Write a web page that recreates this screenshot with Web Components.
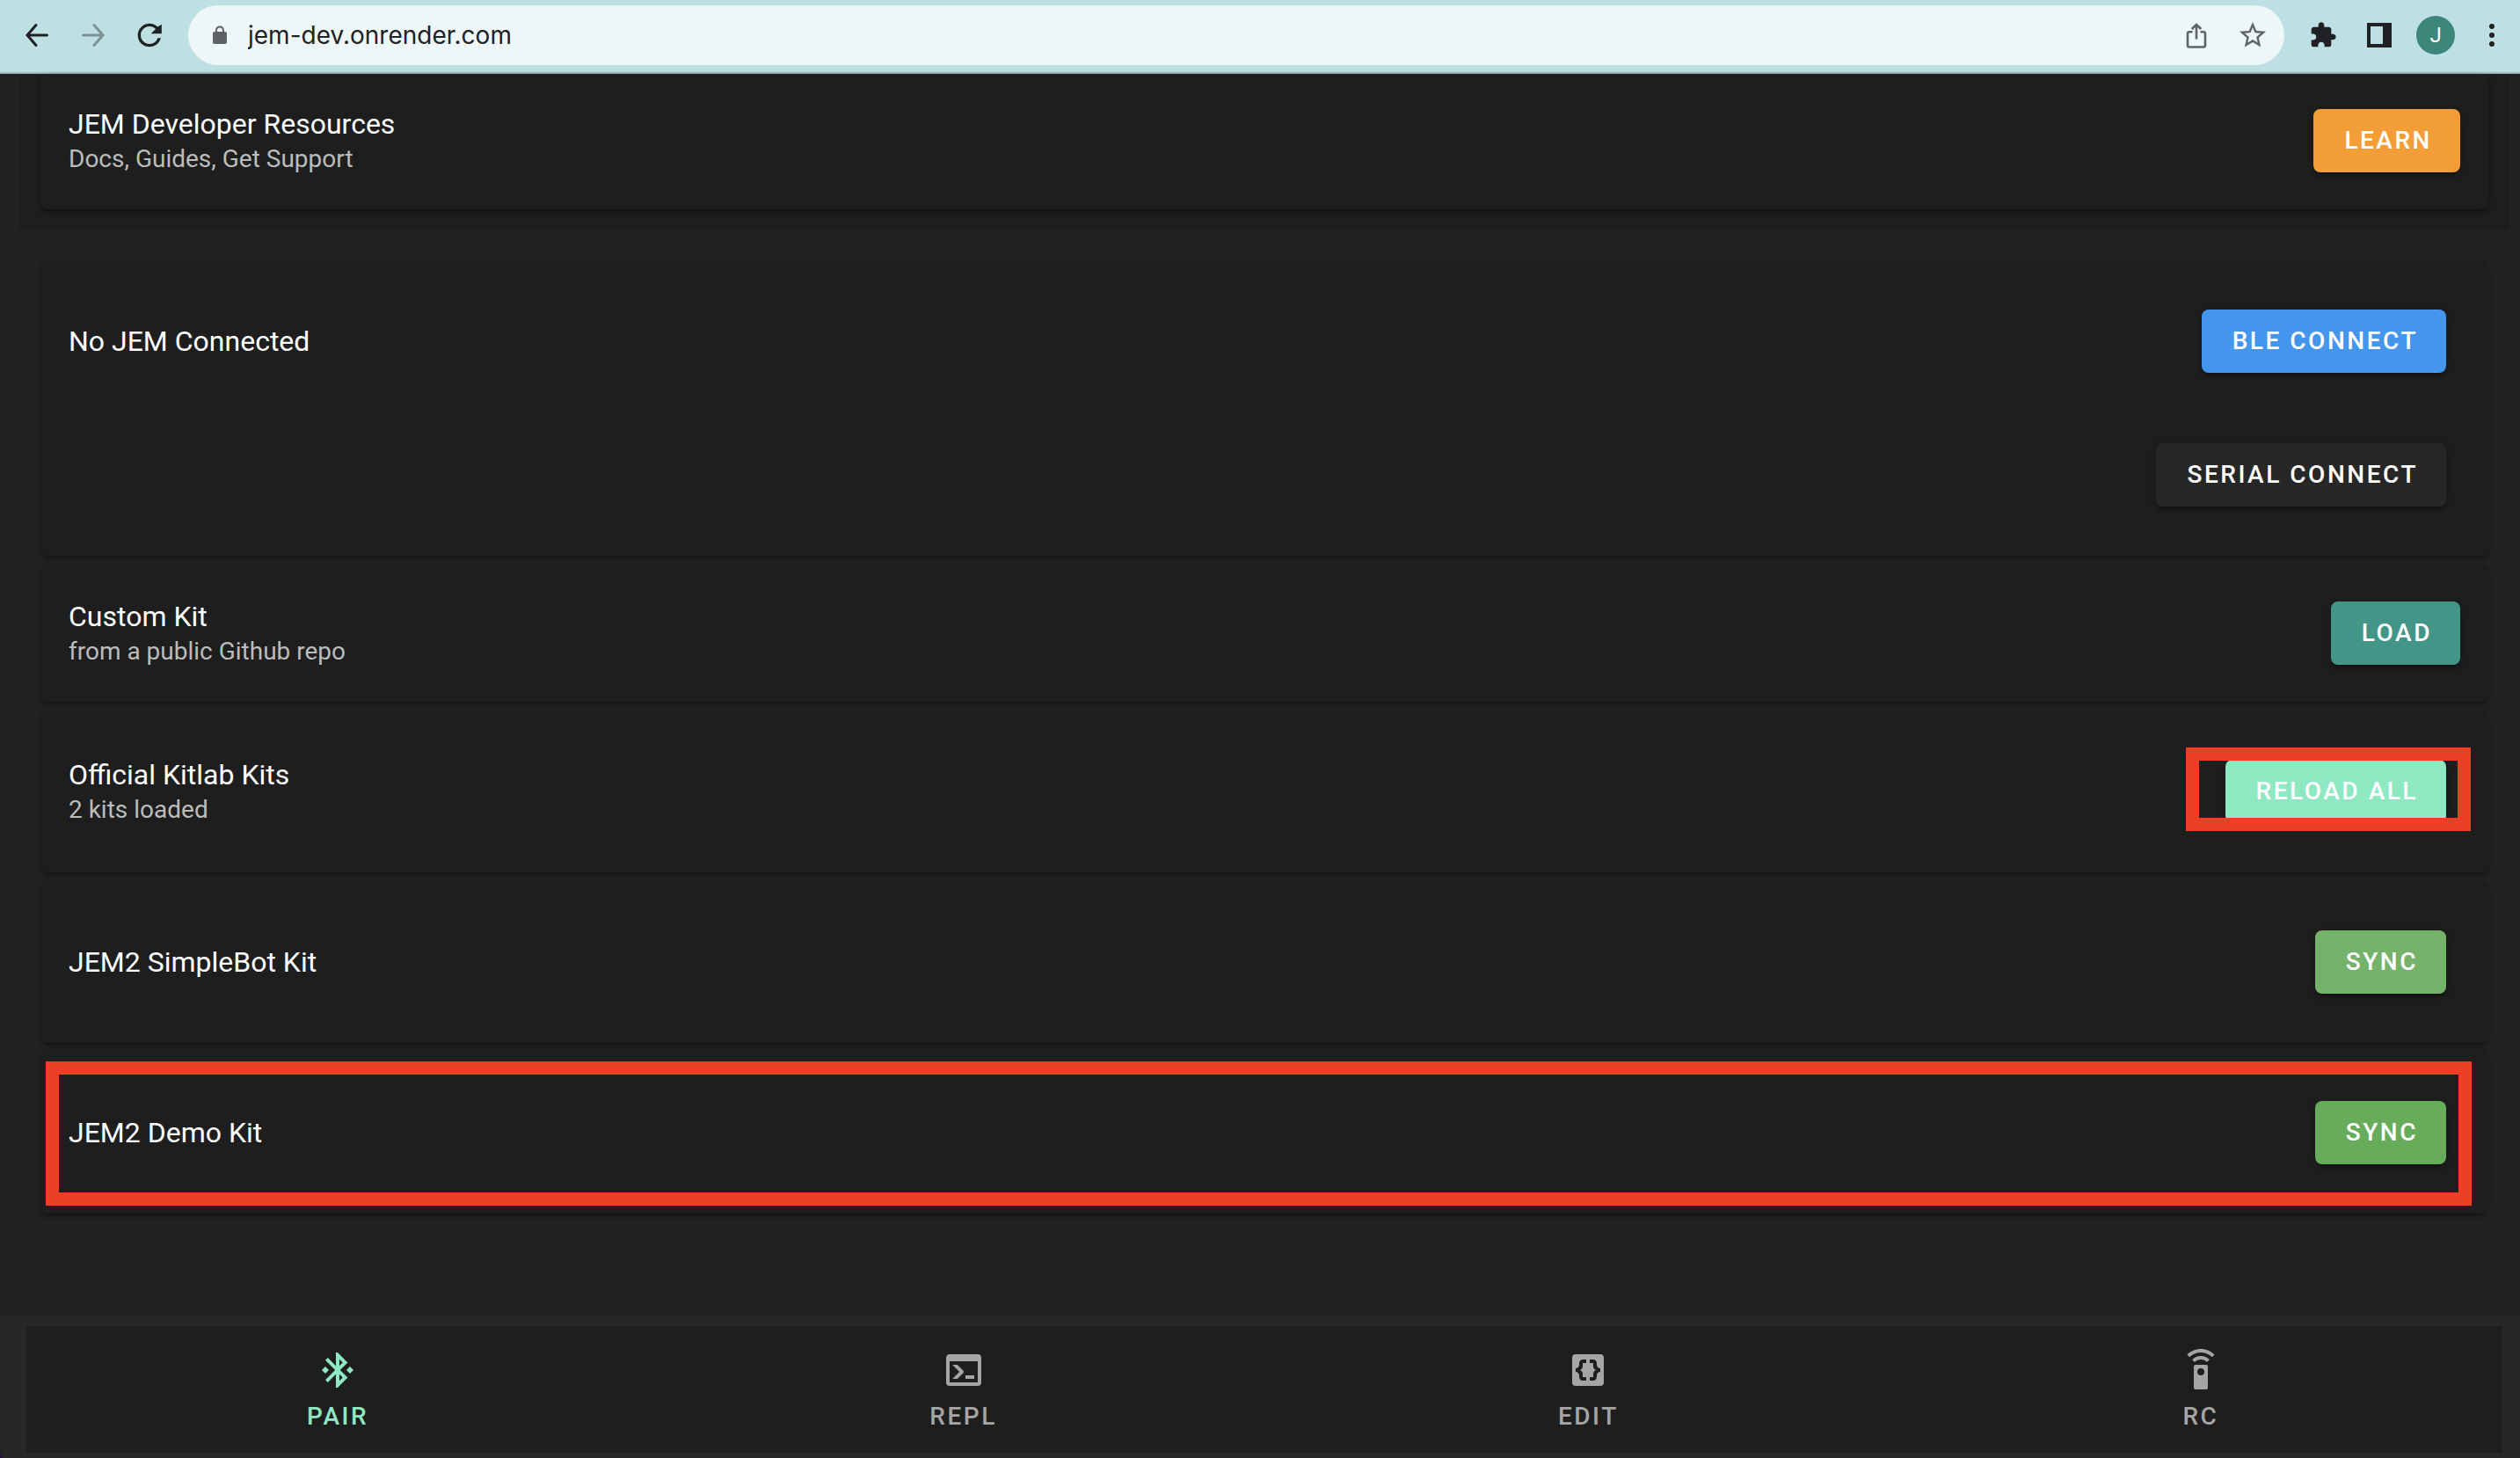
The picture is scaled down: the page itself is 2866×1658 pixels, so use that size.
<!DOCTYPE html>
<html lang="en">
<head>
<meta charset="utf-8">
<meta name="viewport" content="width=device-width, initial-scale=1">
<title>JEM Dev</title>
<style>
  html { background: #23104f; }
  body { margin: 0; font-family: Roboto, "Liberation Sans", sans-serif; color: #fff; }
</style>
</head>
<body>
<jem-window></jem-window>

<script>
const ICONS = {
  back: '<svg viewBox="0 0 40 40" fill="none" stroke="currentColor" stroke-width="3" stroke-linecap="round" stroke-linejoin="miter"><path d="M31.500 20H10M19 8.500 9 20l10 11.500"/></svg>',
  forward: '<svg viewBox="0 0 40 40" fill="none" stroke="currentColor" stroke-width="3" stroke-linecap="round" stroke-linejoin="miter"><path d="M8.500 20H30M21 8.500 31 20 21 31.500"/></svg>',
  reload: '<svg viewBox="0 0 24 24" fill="currentColor"><path d="M17.650 6.350A7.958 7.958 0 0 0 12 4c-4.420 0-7.990 3.580-7.990 8s3.570 8 7.990 8c3.730 0 6.840-2.550 7.730-6h-2.080A5.990 5.990 0 0 1 12 18c-3.310 0-6-2.690-6-6s2.690-6 6-6c1.660 0 3.140.690 4.220 1.780L13 11h7.300V4.600z"/></svg>',
  lock: '<svg viewBox="0 0 24 24" fill="currentColor"><path d="M18 8h-1V6.500C17 3.500 14.800 1.500 12 1.500S7 3.500 7 6.500V8H6c-1.100 0-2 .900-2 2v10c0 1.100.900 2 2 2h12c1.100 0 2-.900 2-2V10c0-1.100-.900-2-2-2zM9 8V6.500c0-1.900 1.300-3 3-3s3 1.100 3 3V8z"/></svg>',
  share: '<svg viewBox="0 0 40 40" fill="none" stroke="currentColor" stroke-width="2.600"><path d="M15.500 16.300H12a2 2 0 0 0-2 2V31.500a2 2 0 0 0 2 2H28a2 2 0 0 0 2-2V18.300a2 2 0 0 0-2-2H24.500M20 24.500V8.500M14.700 13 20 8l5.300 5"/></svg>',
  star: '<svg viewBox="0 0 24 24" fill="currentColor"><path d="M22 9.240l-7.190-.620L12 2 9.190 8.630 2 9.240l5.460 4.730L5.820 21 12 17.270 18.180 21l-1.630-7.030L22 9.240zM12 15.400l-3.760 2.270 1-4.280-3.320-2.880 4.380-.380L12 6.100l1.710 4.040 4.380.380-3.320 2.880 1 4.280L12 15.400z"/></svg>',
  puzzle: '<svg viewBox="0 0 24 24" fill="currentColor"><path d="M20.500 11H19V7c0-1.100-.900-2-2-2h-4V3.500C13 2.120 11.880 1 10.500 1S8 2.120 8 3.500V5H4c-1.100 0-1.990.900-1.990 2v3.800H3.500c1.490 0 2.700 1.210 2.700 2.700s-1.210 2.700-2.700 2.700H2V20c0 1.100.900 2 2 2h3.800v-1.500c0-1.490 1.210-2.700 2.700-2.700 1.490 0 2.700 1.210 2.700 2.700V22H17c1.100 0 2-.900 2-2v-4h1.500c1.380 0 2.500-1.120 2.500-2.500S21.880 11 20.500 11z"/></svg>',
  panel: '<svg viewBox="0 0 40 40" fill="currentColor"><path fill-rule="evenodd" d="M6 6H34V34H6zM10 10V30H24V10z"/></svg>',
  dots: '<svg viewBox="0 0 40 40" fill="currentColor"><circle cx="20" cy="10" r="3"/><circle cx="20" cy="20" r="3"/><circle cx="20" cy="30" r="3"/></svg>',
  bluetooth: '<svg viewBox="0 0 24 24" fill="currentColor"><path d="M19,10L17,12L19,14L21,12M14.880,16.290L13,18.170V14.410M13,5.830L14.880,7.710L13,9.580M17.710,7.710L12,2H11V9.580L6.410,5L5,6.410L10.590,12L5,17.580L6.410,19L11,14.410V22H12L17.710,16.290L13.410,12M7,12L5,10L3,12L5,14L7,12Z"/></svg>',
  console: '<svg viewBox="0 0 24 24" fill="currentColor"><path d="M20,19V7H4V19H20M20,3A2,2 0 0,1 22,5V19A2,2 0 0,1 20,21H4A2,2 0 0,1 2,19V5C2,3.890 2.900,3 4,3H20M13,17V15H18V17H13M9.580,13L5.570,9H8.400L11.700,12.300C12.090,12.690 12.090,13.330 11.700,13.720L8.420,17H5.590L9.580,13Z"/></svg>',
  braces: '<svg viewBox="0 0 24 24" fill="currentColor"><path fill-rule="evenodd" d="M19,3H5A2,2 0 0,0 3,5V19A2,2 0 0,0 5,21H19A2,2 0 0,0 21,19V5A2,2 0 0,0 19,3M11,8H9V10C9,11.100 8.100,12 7,12C8.100,12 9,12.900 9,14V16H11V18H9C7.900,18 7,17.100 7,16V15C7,13.900 6.100,13 5,13V11C6.100,11 7,10.100 7,9V8C7,6.900 7.900,6 9,6H11V8M19,13C17.900,13 17,13.900 17,15V16C17,17.100 16.100,18 15,18H13V16H15V14C15,12.900 15.900,12 17,12C15.900,12 15,11.100 15,10V8H13V6H15C16.100,6 17,6.900 17,8V9C17,10.100 17.900,11 19,11V13Z"/></svg>',
  remote: '<svg viewBox="0 0 24 24" fill="currentColor"><path d="M12,0C8.960,0 6.210,1.230 4.220,3.220L5.630,4.630C7.260,3 9.500,2 12,2C14.500,2 16.740,3 18.360,4.640L19.770,3.230C17.790,1.230 15.040,0 12,0M7.050,6.050L8.460,7.460C9.370,6.560 10.620,6 12,6C13.380,6 14.630,6.560 15.540,7.460L16.950,6.050C15.680,4.780 13.930,4 12,4C10.070,4 8.320,4.780 7.050,6.050M12,15A2,2 0 0,1 10,13A2,2 0 0,1 12,11A2,2 0 0,1 14,13A2,2 0 0,1 12,15M15,9H9A1,1 0 0,0 8,10V22A1,1 0 0,0 9,23H15A1,1 0 0,0 16,22V10A1,1 0 0,0 15,9Z"/></svg>'
};

function define(name, html) {
  const template = document.createElement('template');
  template.innerHTML = html;
  customElements.define(name, class extends HTMLElement {
    constructor() {
      super();
      this.attachShadow({ mode: 'open' }).append(template.content.cloneNode(true));
    }
  });
}

customElements.define('jem-icon', class extends HTMLElement {
  constructor() {
    super();
    this.attachShadow({ mode: 'open' });
  }
  connectedCallback() {
    this.shadowRoot.innerHTML = `
      <style>
        :host { display: block; flex: none; width: var(--icon-size, 40px); height: var(--icon-size, 40px); }
        svg { display: block; width: 100%; height: 100%; }
      </style>${ICONS[this.getAttribute('name')] || ''}`;
  }
});

/* Icon button of the browser toolbar */
customElements.define('tool-button', class extends HTMLElement {
  constructor() {
    super();
    this.attachShadow({ mode: 'open' });
  }
  connectedCallback() {
    const icon = this.getAttribute('icon');
    this.shadowRoot.innerHTML = `
      <style>
        :host { display: block; flex: none; color: #202124; }
        :host([tone="faded"]) { color: #7c9295; }
        :host([tone="soft"]) { color: #5f6368; }
        button { display: flex; align-items: center; justify-content: center; width: 40px; height: 40px;
                 margin: 0; padding: 0; border: 0; background: none; color: inherit; }
      </style>
      <button type="button" aria-label="${this.getAttribute('label')}"><jem-icon name="${icon}"></jem-icon></button>`;
  }
});

define('browser-bar', `
  <style>
    :host { display: flex; align-items: center; gap: 24px; height: 84px; box-sizing: border-box; flex: none;
            padding: 0 12px 4px 22px; background: #bee0e2; box-shadow: inset 0 -2px #9cb9bb; }
    .address { flex: 1; display: flex; align-items: center; gap: 24px; height: 68px; box-sizing: border-box;
               padding: 0 16px 0 24px; border-radius: 34px; background: #edf7f8; min-width: 0; }
    .lock { --icon-size: 24px; color: #5f6368; }
    label { display: flex; align-items: center; gap: 20px; flex: 1; min-width: 0; }
    input { flex: 1; min-width: 0; margin: 0; padding: 0; border: 0; outline: 0; background: none;
            font: 28px/36px Inter, "Liberation Sans", sans-serif; color: #202124; }
    .star { --icon-size: 36px; }
    .puzzle { --icon-size: 32px; }
    .avatar { width: 44px; height: 44px; margin: 0 -2px; padding: 0; border: 0; border-radius: 50%; flex: none;
              background: #3c877a; color: #fff; font: 24px/44px Roboto, "Liberation Sans", sans-serif; text-align: center; }
  </style>
  <tool-button icon="back" label="Back"></tool-button>
  <tool-button icon="forward" label="Forward" tone="faded"></tool-button>
  <tool-button icon="reload" label="Reload"></tool-button>
  <div class="address">
    <label><jem-icon class="lock" name="lock"></jem-icon><input type="text" value="jem-dev.onrender.com" aria-label="Address"></label>
    <tool-button icon="share" label="Share" tone="soft"></tool-button>
    <tool-button class="star" icon="star" label="Bookmark" tone="soft"></tool-button>
  </div>
  <tool-button class="puzzle" icon="puzzle" label="Extensions"></tool-button>
  <tool-button icon="panel" label="Side panel"></tool-button>
  <button class="avatar" type="button">J</button>
  <tool-button icon="dots" label="Menu"></tool-button>
`);

define('jem-button', `
  <style>
    :host { display: block; flex: none; }
    button { display: block; height: 72px; margin: 0; padding: 0 32px 0 35px; border: 0; border-radius: 8px;
             background: var(--tone, #272727); color: #fff;
             font: 500 28px/72px Roboto, "Liberation Sans", sans-serif; letter-spacing: 0.09em; white-space: nowrap;
             box-shadow: 0 6px 2px -4px rgba(0,0,0,.2), 0 4px 4px rgba(0,0,0,.14), 0 2px 10px rgba(0,0,0,.12); }
  </style>
  <button type="button"><slot></slot></button>
`);

/* One row of a card: heading and note on the left, action on the right */
define('jem-row', `
  <style>
    :host { display: flex; align-items: center; justify-content: space-between; height: 72px; }
    .text { display: flex; flex-direction: column; gap: 1px; }
    ::slotted(h2) { margin: 0; font-size: 32px; line-height: 40px; font-weight: 400; color: #fff; }
    ::slotted(p) { margin: 0; font-size: 28px; line-height: 38px; color: #bcbcbc; }
  </style>
  <div class="text"><slot name="title"></slot><slot name="note"></slot></div>
  <slot></slot>
`);

define('jem-card', `
  <style>
    :host { display: flex; flex-direction: column; gap: 80px; position: relative; box-sizing: border-box;
            padding: 56px 48px 56px 32px; border-radius: 8px; background: #1e1e1e;
            box-shadow: 0 6px 2px -4px rgba(0,0,0,.2), 0 4px 4px rgba(0,0,0,.14), 0 2px 10px rgba(0,0,0,.12); }
    :host([compact]) { padding: 42px 32px; }
    :host([cut]) { padding-top: 40px; border-top-left-radius: 0; border-top-right-radius: 0; }
  </style>
  <slot></slot>
`);

/* Red outline laid over a card to point something out */
define('highlight-box', `
  <style>
    :host { display: block; position: absolute; box-sizing: border-box; border: 15px solid #eb4025; pointer-events: none; }
    :host([around="button"]) { top: 42px; right: 20px; bottom: 47px; width: 324px; }
    :host([around="card"]) { inset: 11px 19px 9px 6px; }
  </style>
`);

customElements.define('nav-tab', class extends HTMLElement {
  constructor() {
    super();
    this.attachShadow({ mode: 'open' });
  }
  connectedCallback() {
    this.shadowRoot.innerHTML = `
      <style>
        :host { display: flex; flex: 1 1 auto; color: #a5a5a5; }
        :host([selected]) { color: #8ee8c2; }
        a { flex: 1; display: flex; flex-direction: column; align-items: center; justify-content: center; gap: 13px;
            padding: 1px 32px 0; color: inherit; text-decoration: none;
            font-size: 28px; line-height: 32px; font-weight: 500; letter-spacing: 0.09em; --icon-size: 48px; }
      </style>
      <a href="#"><jem-icon name="${this.getAttribute('icon')}"></jem-icon><slot></slot></a>`;
  }
});

define('jem-nav', `
  <style>
    :host { display: block; flex: none; padding: 12px 20px 6px 30px; background: #272727; }
    nav { display: flex; height: 144px; background: #1e1e1e; }
  </style>
  <nav>
    <nav-tab icon="bluetooth" selected>PAIR</nav-tab>
    <nav-tab icon="console">REPL</nav-tab>
    <nav-tab icon="braces">EDIT</nav-tab>
    <nav-tab icon="remote">RC</nav-tab>
  </nav>
`);

define('jem-window', `
  <style>
    :host { display: flex; flex-direction: column; min-height: 100vh; overflow: hidden; background: #222;
            border-bottom-left-radius: 5px 8px; }
    main { flex: 1; padding: 0 12px 0 22px; }
    section { display: flex; flex-direction: column; gap: 10px; padding: 0 24px; }
    .intro { padding-bottom: 24px; margin-bottom: 34px; background: #1e1e1e; }
  </style>
  <browser-bar></browser-bar>
  <main>
    <section class="intro">
      <jem-card compact cut>
        <jem-row><h2 slot="title">JEM Developer Resources</h2><p slot="note">Docs, Guides, Get Support</p>
          <jem-button style="--tone:#f39d38">LEARN</jem-button></jem-row>
      </jem-card>
    </section>
    <section>
      <jem-card>
        <jem-row><h2 slot="title">No JEM Connected</h2><jem-button style="--tone:#4495ec">BLE CONNECT</jem-button></jem-row>
        <jem-row><jem-button>SERIAL CONNECT</jem-button></jem-row>
      </jem-card>
      <jem-card compact>
        <jem-row><h2 slot="title">Custom Kit</h2><p slot="note">from a public Github repo</p>
          <jem-button style="--tone:#429587">LOAD</jem-button></jem-row>
      </jem-card>
      <jem-card>
        <jem-row><h2 slot="title">Official Kitlab Kits</h2><p slot="note">2 kits loaded</p>
          <jem-button style="--tone:#8ee8c2">RELOAD ALL</jem-button></jem-row>
        <highlight-box around="button"></highlight-box>
      </jem-card>
      <jem-card>
        <jem-row><h2 slot="title">JEM2 SimpleBot Kit</h2><jem-button style="--tone:#75b36b">SYNC</jem-button></jem-row>
      </jem-card>
      <jem-card>
        <jem-row><h2 slot="title">JEM2 Demo Kit</h2><jem-button style="--tone:#67ac5b">SYNC</jem-button></jem-row>
        <highlight-box around="card"></highlight-box>
      </jem-card>
    </section>
  </main>
  <jem-nav></jem-nav>
`);
</script>
</body>
</html>
